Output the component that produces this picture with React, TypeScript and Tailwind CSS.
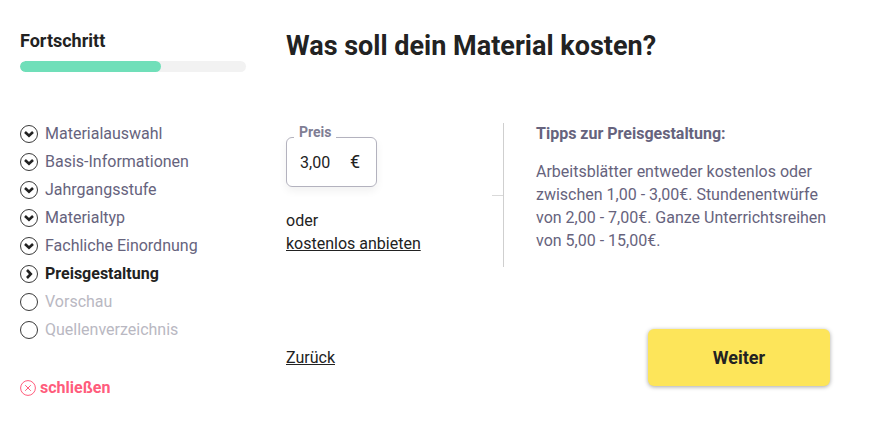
import { useState } from 'react'

type StepState = 'done' | 'current' | 'open'

interface IStep {
  label: string
  state: StepState
}

const steps: IStep[] = [
  { label: 'Materialauswahl', state: 'done' },
  { label: 'Basis-Informationen', state: 'done' },
  { label: 'Jahrgangsstufe', state: 'done' },
  { label: 'Materialtyp', state: 'done' },
  { label: 'Fachliche Einordnung', state: 'done' },
  { label: 'Preisgestaltung', state: 'current' },
  { label: 'Vorschau', state: 'open' },
  { label: 'Quellenverzeichnis', state: 'open' },
]

const stepClasses: Record<StepState, string> = {
  done: 'text-[#66637d]',
  current: 'font-bold text-[#222222]',
  open: 'text-[#b9b8c2]',
}

function StepIcon({ state }: { state: StepState }) {
  return (
    <svg className="size-[18px] shrink-0 text-[#222222]" viewBox="0 0 18 18" fill="none" stroke="currentColor" aria-hidden="true">
      <circle cx="9" cy="9" r="8.5" strokeWidth="0.9" />
      {state === 'done' && <path d="M5 7 9 10.8 13 7" strokeWidth="2.6" />}
      {state === 'current' && <path d="M7 5 10.8 9 7 13" strokeWidth="2.6" />}
    </svg>
  )
}

function Sidebar() {
  const progress = 62.5

  return (
    <aside className="w-[226px] shrink-0 pt-px">
      <h2 id="progress-title" className="text-lg leading-6 font-bold">
        Fortschritt
      </h2>
      <div
        role="progressbar"
        aria-labelledby="progress-title"
        aria-valuenow={progress}
        className="h-[11px] mt-2 overflow-hidden rounded-full bg-[#f2f2f2]"
      >
        <div className="h-full rounded-full bg-[#70dfb9]" style={{ width: `${progress}%` }} />
      </div>

      <ol className="mt-12">
        {steps.map((step) => (
          <li key={step.label} className={`flex items-center h-7 gap-[7px] ${stepClasses[step.state]}`}>
            <StepIcon state={step.state} />
            {step.label}
          </li>
        ))}
      </ol>

      <button type="button" className="flex items-center gap-1 mt-8 leading-6 font-bold text-[#ff5c7c]">
        <svg className="size-4" viewBox="0 0 16 16" fill="none" stroke="currentColor" aria-hidden="true">
          <circle cx="8" cy="8" r="7.4" />
          <path d="m5.2 5.2 5.6 5.6M10.8 5.2l-5.6 5.6" />
        </svg>
        schließen
      </button>
    </aside>
  )
}

export default function App() {
  const [price, setPrice] = useState('3,00')

  return (
    <div className="flex gap-10 pt-7 pb-8 pl-5 pr-[60px] bg-white font-[Roboto,sans-serif] text-base text-[#222222]">
      <Sidebar />

      <main className="flex-1 min-w-0">
        <h1 className="text-[27px] leading-9 font-bold">Was soll dein Material kosten?</h1>

        <div className="flex mt-[59px]">
          <div className="flex-1 leading-[23px]">
            <div className="relative flex items-center w-[91px] h-[50px] mt-[14px] px-[13px] border border-[#b3b2be] rounded-md shadow-[0_4px_8px_rgba(0,0,0,0.06)]">
              <label htmlFor="price" className="absolute -top-[14px] left-[7px] px-[5px] bg-white text-sm leading-4 font-bold text-[#807e94]">
                Preis
              </label>
              <input
                id="price"
                value={price}
                onChange={(e) => setPrice(e.target.value)}
                className="flex-1 w-0 outline-none"
              />
              <span className="pr-[3px] text-lg">€</span>
            </div>
            <p className="mt-[22px]">oder</p>
            <a href="#kostenlos" className="underline">
              kostenlos anbieten
            </a>
          </div>

          {/* Tips with the connector line */}
          <div className="flex items-center">
            <span className="w-[11px] h-px bg-[#d9d9d9]" />
            <section className="w-[327px] pb-[15px] pl-8 border-l border-[#cfcfcf] text-[#66637d]">
              <h2 className="leading-[21px] font-bold">Tipps zur Preisgestaltung:</h2>
              <p className="mt-4 leading-[23px]">
                Arbeitsblätter entweder kostenlos oder zwischen 1,00 - 3,00€. Stundenentwürfe von 2,00 - 7,00€. Ganze
                Unterrichtsreihen von 5,00 - 15,00€.
              </p>
            </section>
          </div>
        </div>

        <div className="flex items-center justify-between mt-[62px]">
          <a href="#zurueck" className="underline">
            Zurück
          </a>
          <button
            type="button"
            className="w-[182px] h-[57px] rounded-md bg-[#fde55a] text-lg font-bold shadow-[0_1px_4px_rgba(0,0,0,0.35)]"
          >
            Weiter
          </button>
        </div>
      </main>
    </div>
  )
}
